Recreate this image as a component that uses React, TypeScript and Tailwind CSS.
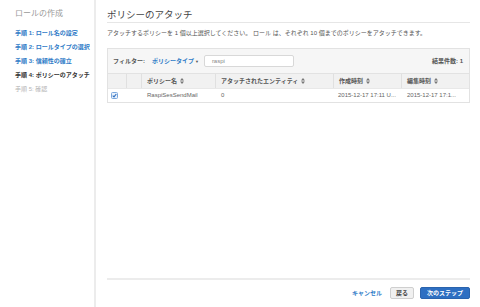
const font = { fontFamily: '"Liberation Sans", "Noto Sans CJK JP", sans-serif' };

const steps = [
	{ label: "手順 1: ロール名の設定", cls: "text-[#2f7bc7]" },
	{ label: "手順 2: ロールタイプの選択", cls: "text-[#2f7bc7]" },
	{ label: "手順 3: 信頼性の確立", cls: "text-[#2f7bc7]" },
	{ label: "手順 4: ポリシーのアタッチ", cls: "text-[#333]" },
	{ label: "手順 5: 確認", cls: "text-[#b5b5b5] font-normal" },
];

function SortIcon() {
	return (
		<svg width="4" height="6" viewBox="0 0 4 6" className="ml-[3px] inline-block">
			<path d="M2 0 L4 2.4 L0 2.4 Z M2 6 L4 3.6 L0 3.6 Z" fill="#777" />
		</svg>
	);
}

const cols = [
	{ label: "", w: "w-[19px]" },
	{ label: "", w: "w-[15px]" },
	{ label: "ポリシー名", w: "w-[74px]", sort: true },
	{ label: "アタッチされたエンティティ", w: "w-[118px]", sort: true },
	{ label: "作成時刻", w: "w-[68px]", sort: true },
	{ label: "編集時刻", w: "flex-1", sort: true },
];

export default function App() {
	return (
		<div className="flex w-[480px] h-[307px] bg-white overflow-hidden" style={font}>
			<aside className="w-[96px] shrink-0 border-r-2 border-[#ececec] pl-[15px] pt-[9px]">
				<div className="text-[8px] leading-[10px] text-[#9a9a9a]">ロールの作成</div>
				<ul className="mt-[10px] space-y-[5px]">
					{steps.map((s, i) => (
						<li key={i} className={`text-[6px] leading-[9px] font-bold whitespace-nowrap ${s.cls}`}>
							{s.label}
						</li>
					))}
				</ul>
			</aside>

			<main className="flex-1 flex flex-col pl-[11px] pr-[10px]">
				<h1 className="pt-[9px] pb-[2px] text-[9.5px] leading-[11px] text-[#444] border-b border-[#e6e6e6]">
					ポリシーのアタッチ
				</h1>
				<p className="mt-[6px] text-[6px] leading-[8px] text-[#555] whitespace-nowrap">
					アタッチするポリシーを 1 個以上選択してください。 ロール は、それぞれ 10 個までのポリシーをアタッチできます。
				</p>

				<div className="mt-[11px] border border-[#e2e2e2]">
					<div className="h-[24px] flex items-center bg-[#f6f6f6] pl-[5px] pr-[6px] text-[6px]">
						<span className="font-bold text-[#555]">フィルター:</span>
						<span className="ml-[7px] font-bold text-[#2f7bc7]">
							ポリシータイプ<span className="text-[#555] text-[4px] ml-[1px]">▼</span>
						</span>
						<div className="ml-[5px] w-[90px] h-[12px] bg-white border border-[#d8d8d8] rounded-[2px] flex items-center pl-[7px] text-[#888]">
							raspi
						</div>
						<span className="ml-auto font-bold text-[#555]">結果件数: 1</span>
					</div>
					<div className="h-[15px] flex bg-[#f1f1f1] border-t border-[#e2e2e2] text-[6px] font-bold text-[#555]">
						{cols.map((c, i) => (
							<div
								key={i}
								className={`${c.w} flex items-center pl-[5px] ${i < cols.length - 1 ? "border-r border-[#e0e0e0]" : ""}`}
							>
								{c.label}
								{c.sort && <SortIcon />}
							</div>
						))}
					</div>
					<div className="h-[14px] flex bg-white border-t border-[#e8e8e8] text-[6px] text-[#666]">
						<div className="w-[19px] flex items-center pl-[3px]">
							<div className="w-[7px] h-[7px] rounded-[1.5px] border border-[#7aa7dc] bg-[#e9f1fb] flex items-center justify-center">
								<svg width="5" height="5" viewBox="0 0 5 5">
									<path d="M0.7 2.6 L2 3.9 L4.3 1" stroke="#2f6fc0" strokeWidth="1.1" fill="none" />
								</svg>
							</div>
						</div>
						<div className="w-[15px]" />
						<div className="w-[74px] flex items-center pl-[5px]">RaspiSesSendMail</div>
						<div className="w-[118px] flex items-center pl-[5px]">0</div>
						<div className="w-[68px] flex items-center pl-[4px] whitespace-nowrap overflow-hidden">2015-12-17 17:11 U...</div>
						<div className="flex-1 flex items-center pl-[5px] whitespace-nowrap overflow-hidden">2015-12-17 17:1...</div>
					</div>
				</div>

				<div className="flex-1" />

				<div className="border-t-2 border-[#ececec] h-[29px] flex items-center justify-end gap-[6px] pb-[1px]">
					<span className="text-[6px] font-bold text-[#2f7bc7] mr-[2px]">キャンセル</span>
					<button className="h-[12px] px-[5px] bg-[#f0f0f0] border border-[#cfcfcf] rounded-[2px] text-[6px] font-bold text-[#444]">
						戻る
					</button>
					<button className="h-[12px] px-[6px] bg-[#2e6fc2] border border-[#2a63ad] rounded-[2px] text-[6px] font-bold text-white">
						次のステップ
					</button>
				</div>
			</main>
		</div>
	);
}
